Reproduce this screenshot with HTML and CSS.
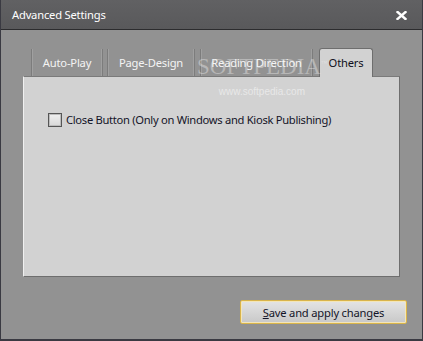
FILE: index.html
```html
<!DOCTYPE html>
<html>
<head>
<meta charset="utf-8">
<link rel="stylesheet" href="styles.css">
</head>
<body>
<div class="window">
  <div class="titlebar">
    <span class="title">Advanced Settings</span>
    <svg class="close" width="11" height="9" viewBox="0 0 11 9"><path d="M1.5 1 L9.5 8 M9.5 1 L1.5 8" stroke="#fff" stroke-width="2.4" stroke-linecap="square"/></svg>
  </div>
  <div class="body">
    <div class="tabs">
      <div class="tab t1">Auto-Play</div>
      <div class="tab t2">Page-Design</div>
      <div class="tab t3">Reading Direction</div>
      <div class="tab active">Others</div>
    </div>
    <div class="panel">
      <label class="option"><span class="box"></span><span>Close Button (Only on Windows and Kiosk Publishing)</span></label>
    </div>
    <div class="footer">
      <button class="save"><u>S</u>ave and apply changes</button>
    </div>
    <div class="watermark"><span class="wm-big">SOFTPEDIA<sup>™</sup></span><span class="wm-small">www.softpedia.com</span></div>
  </div>
</div>
</body>
</html>
```
FILE: styles.css
```css
* { box-sizing: border-box; }
html, body { margin: 0; padding: 0; }
body { width: 423px; height: 341px; overflow: hidden; background: #3c3c44; font-family: "Noto Sans", sans-serif; }
.window { width: 423px; height: 341px; display: flex; flex-direction: column; border: 1px solid #3a3a42; border-top: 0; border-bottom-width: 2px; }
.titlebar { height: 30px; flex: none; background: linear-gradient(#616163, #59595b); border-bottom: 1px solid #2c2c2e; display: flex; align-items: center; justify-content: space-between; padding: 0 15px 0 11px; }
.title { color: #fff; font-size: 11.2px; letter-spacing: -0.2px; }
.close { margin-top: 1px; }
.body { position: relative; flex: 1; background: #929292; padding: 18px 22px 0 22px; display: flex; flex-direction: column; }
.tabs { display: flex; height: 28px; padding-left: 8px; align-items: flex-end; }
.tab { height: 27px; font-size: 11.2px; letter-spacing: -0.2px; color: #f4f4f4; display: flex; align-items: center; justify-content: center; border-left: 1px solid #7c7c7c; border-right: 1px solid #7c7c7c; box-shadow: inset 1px 0 #a0a0a0, inset -1px 0 #a0a0a0; white-space: nowrap; }
.t1 { width: 72px; margin-right: 4px; }
.t2 { width: 88px; margin-right: 5px; }
.t3 { width: 113px; margin-right: 6px; }
.tab.active { width: 54px; height: 29px; margin-bottom: -1px; background: #d2d2d2; color: #101020; border: 1px solid #6e6e6e; border-bottom: 0; border-radius: 3px 3px 0 0; box-shadow: none; position: relative; z-index: 1; padding-bottom: 1px; }
.panel { height: 201px; background: #d2d2d2; border: 1px solid #6e6e6e; border-left-color: #f0f0f0; border-top-color: #7a7a7a; padding: 35px 0 0 24px; }
.option { display: flex; align-items: center; gap: 4px; font-size: 11.2px; letter-spacing: -0.3px; color: #141428; white-space: nowrap; }
.box { width: 14px; height: 14px; border: 1px solid #555; background: linear-gradient(#f0f0f0, #d8d8d8); box-shadow: inset 0 0 0 1px #bcbcbc; }
.footer { display: flex; justify-content: flex-end; padding-top: 23px; margin-right: -7px; }
.save { width: 167px; height: 24px; border: 1px solid #d9b44a; border-radius: 2px; background: linear-gradient(#e4e4e4, #c8c8c8); font-family: "Noto Sans", sans-serif; font-size: 11.2px; letter-spacing: -0.2px; color: #141428; padding: 0; box-shadow: inset 0 0 0 1px #f4e6b8; }
.watermark { position: absolute; left: 196px; top: 20px; z-index: 2; display: flex; flex-direction: column; align-items: center; pointer-events: none; color: rgba(255,255,255,0.35); white-space: nowrap; }
.wm-big { font-family: "Liberation Serif", serif; font-size: 23px; line-height: 26px; }
.wm-big sup { font-size: 6px; }
.wm-small { font-family: "Liberation Sans", sans-serif; font-size: 10px; margin-top: 6px; color: rgba(255,255,255,0.5); }
```
